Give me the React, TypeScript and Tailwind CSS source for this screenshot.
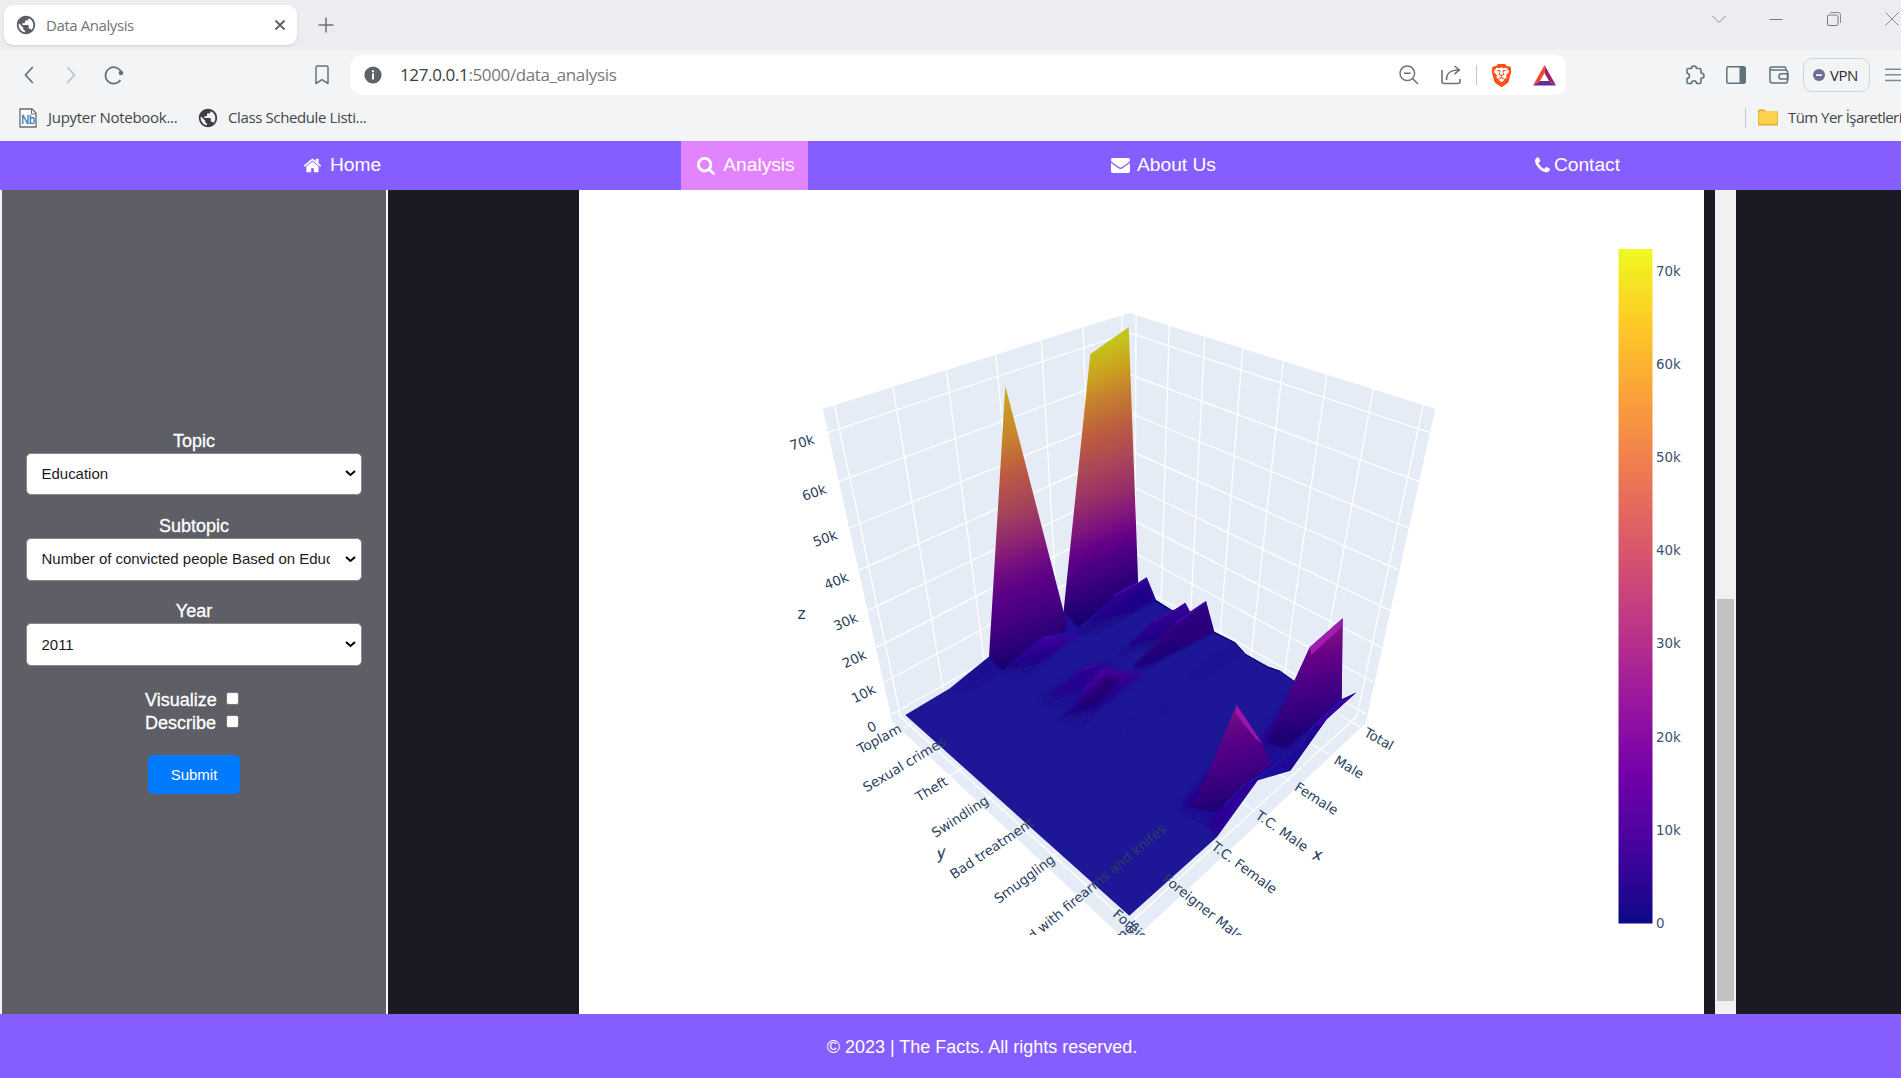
import React from "react";
import { MdPublic } from "react-icons/md";
import { SiBrave } from "react-icons/si";

const navIcons = {
  home: "M1472 992v480q0 26-19 45t-45 19h-384v-384h-256v384h-384q-26 0-45-19t-19-45v-480q0-1 .5-3t.5-3l575-474 575 474q1 2 1 6zm223-69l-62 74q-8 9-21 11h-3q-13 0-21-7l-692-577-692 577q-12 8-24 7-13-2-21-11l-62-74q-8-10-7-23.5t11-21.5l719-599q32-26 76-26t76 26l244 204v-195q0-14 9-23t23-9h192q14 0 23 9t9 23v408l219 182q10 8 11 21.5t-7 23.5z",
  search:
    "M1216 832q0-185-131.5-316.5t-316.5-131.5-316.5 131.5-131.5 316.5 131.5 316.5 316.5 131.5 316.5-131.5 131.5-316.5zm512 832q0 52-38 90t-90 38q-54 0-90-38l-343-342q-179 124-399 124-143 0-273.5-55.5t-225-150-150-225-55.5-273.5 55.5-273.5 150-225 225-150 273.5-55.5 273.5 55.5 225 150 150 225 55.5 273.5q0 220-124 399l343 343q37 37 37 90z",
  mail: "M1792 710v794q0 66-47 113t-113 47h-1472q-66 0-113-47t-47-113v-794q44 49 101 87 362 246 497 345 57 42 92.5 65.5t94.5 48 110 24.5h2q51 0 110-24.5t94.5-48 92.5-65.5q170-123 498-345 57-39 100-87zm0-294q0 79-49 151t-122 123q-376 261-468 325-10 7-42.5 31t-54 38.5-52 32.5-57.5 27-50 9h-2q-23 0-50-9t-57.5-27-52-32.5-54-38.5-42.5-31q-91-64-262-182.5t-205-142.5q-62-42-117-115.5t-55-136.5q0-78 41.5-130t118.5-52h1472q65 0 112.5 47t47.5 113z",
  phone:
    "M1600 1240q0 27-10 70.5t-21 68.5q-21 50-122 106-94 51-186 51-27 0-53-3.5t-57.5-12.5-47-14.5-55.5-20.5-49-18q-98-35-175-83-127-79-264-216t-216-264q-48-77-83-175-3-9-18-49t-20.5-55.5-14.5-47-12.5-57.5-3.5-53q0-92 51-186 56-101 106-122 25-11 68.5-21t70.5-10q14 0 21 3 18 6 53 76 11 19 30 54t35 63.5 31 53.5q3 4 17.5 25t21.5 35.5 7 28.5q0 20-28.5 50t-62 55-62 53-28.5 46q0 9 5 22.5t8.5 20.5 14 24 11.5 19q76 137 174 235t235 174q2 1 19 11.5t24 14 20.5 8.5 22.5 5q18 0 46-28.5t53-62 55-62 50-28.5q14 0 28.5 7t35.5 21.5 25 17.5q25 15 53.5 31t63.5 35 54 30q70 35 76 53 3 7 3 21z",
};

function TabStrip() {
  return (
    <div className="flex h-[50px] items-center bg-[#ecedf1]">
      <div className="ml-1 flex h-10 w-[293px] items-center rounded-[9px] bg-white pl-[11px] shadow-sm">
        <MdPublic size={22} className="text-[#5b5e63]" />
        <span className="ml-[9px] whitespace-nowrap text-[15px] tracking-[-0.42px] text-[#747477]">Data Analysis</span>
        <svg className="ml-auto mr-[11px]" width="12" height="12" viewBox="0 0 12 12" stroke="#5d5f63" strokeWidth="1.8">
          <path d="M1.5 1.5l9 9M10.5 1.5l-9 9" />
        </svg>
      </div>
      <svg className="ml-[21px]" width="16" height="16" viewBox="0 0 16 16" stroke="#6f7175" strokeWidth="1.5">
        <path d="M8 .5v15M.5 8h15" />
      </svg>
      <div className="-mr-1 mb-[13px] ml-auto flex items-center text-[#8b8d91]">
        <svg width="14" height="14" viewBox="0 0 14 14" fill="none" stroke="currentColor"><path d="M.5 4L7 10.5 13.500 4" /></svg>
        <svg className="ml-[43px]" width="14" height="14" viewBox="0 0 14 14" stroke="#77797d"><path d="M.5 7.500h13" /></svg>
        <svg className="ml-[44px]" width="14" height="14" viewBox="0 0 14 14" fill="none" stroke="currentColor">
          <rect x=".5" y="3" width="10.500" height="10.500" rx="1.500" stroke="#77797d" />
          <path d="M3 .5h8a2.500 2.500 0 0 1 2.500 2.500v8" />
        </svg>
        <svg className="ml-[44px]" width="14" height="14" viewBox="0 0 14 14" stroke="currentColor"><path d="M.5 .5l13 13M13.500 .5l-13 13" /></svg>
        <span className="w-[6px]" />
      </div>
    </div>
  );
}

function Toolbar() {
  return (
    <div className="flex h-[50px] items-center overflow-hidden text-[#5e737c]">
      <svg className="ml-[24px] shrink-0" width="10" height="18" viewBox="0 0 10 18" fill="none" stroke="currentColor" strokeWidth="1.7"><path d="M8.800 1L1.500 9l7.300 8" /></svg>
      <svg className="ml-[32px] shrink-0" width="10" height="18" viewBox="0 0 10 18" fill="none" stroke="#b9c2c7" strokeWidth="1.7"><path d="M1.200 1l7.300 8-7.300 8" /></svg>
      <svg className="ml-[28px] shrink-0" width="20" height="20" viewBox="0 0 20 20" fill="none" stroke="currentColor" strokeWidth="1.7">
        <path d="M16.500 15a8.200 8.200 0 1 1 1-7" />
        <circle cx="17" cy="8" r="2.300" fill="currentColor" stroke="none" />
      </svg>
      <svg className="ml-[191px] shrink-0" width="14" height="20" viewBox="0 0 14 20" fill="none" stroke="currentColor" strokeWidth="1.500" strokeLinejoin="round">
        <path d="M1 2.500Q1 1 2.500 1h9Q13 1 13 2.500V18.500L7 14.700 1 18.500z" />
      </svg>
      <div className="ml-[22px] flex h-10 w-[1215px] shrink-0 items-center rounded-[10px] bg-white pl-[13px]">
        <svg width="18" height="18" viewBox="0 0 18 18"><circle cx="9" cy="9" r="8.600" fill="#5f6368" /><path d="M8 7.600h2v5.900H8zM8 4.300h2v2H8z" fill="#fff" /></svg>
        <span className="ml-[18px] whitespace-nowrap text-[17px] tracking-[-0.37px] text-[#77797c]">
          <span className="text-[#3a3b3e]">127.0.0.1</span>:5000/data_analysis
        </span>
        <svg className="ml-auto" width="20" height="20" viewBox="0 0 20 20" fill="none" stroke="#6f7174" strokeWidth="1.500">
          <circle cx="8.300" cy="8.300" r="7.300" /><path d="M13.500 13.500L19 19M5 8.300h6.600" />
        </svg>
        <svg className="ml-[22px]" width="21" height="20" viewBox="0 0 21 20" fill="none" stroke="#6f7174" strokeWidth="1.600">
          <path d="M1 5v11.500Q1 18.500 3 18.500h14q2 0 2-2V14M5.500 15C5.500 8 9 5 18 5M13.500 1l4.800 4-4.800 4.200" />
        </svg>
        <span className="ml-[14px] h-5 w-px bg-[#c3c5c8]" />
        <SiBrave size={23} className="ml-[13px] text-[#fb4f14]" />
        <svg className="ml-[20px] mr-[10px]" width="23" height="21" viewBox="0 0 23 21">
          <path d="M11.500 0L0 20.500l7-4.500 4.500-8z" fill="#ff4724" />
          <path d="M11.500 0L23 20.500 16 16l-4.500-8z" fill="#9e1f63" />
          <path d="M0 20.500h23L16 16H7z" fill="#662d91" />
        </svg>
      </div>
      <svg className="ml-[119px] shrink-0" width="20" height="20" viewBox="0 0 20 20" fill="none" stroke="currentColor" strokeWidth="1.600" strokeLinejoin="round">
        <path d="M2 5q0-1.500 1.500-1.500h3C6.500 1.800 7.500 1 9 1s2.500.8 2.500 2.500h3Q16 3.500 16 5v3c1.700 0 3 1 3 2.700s-1.300 2.500-3 2.500V17q0 1.500-1.500 1.500h-3c0-1.700-1-2.700-2.500-2.700s-2.500 1-2.500 2.700h-3Q2 18.500 2 17v-3.500c1.600-.2 2.500-1.200 2.500-2.700S3.600 8.300 2 8z" />
      </svg>
      <svg className="ml-[21px] shrink-0" width="20" height="18" viewBox="0 0 20 18" fill="none" stroke="currentColor" strokeWidth="1.500">
        <rect x=".8" y=".8" width="18.400" height="16.400" rx="1.500" /><path d="M13.500 1h5.700v16h-5.700z" fill="currentColor" stroke="none" />
      </svg>
      <svg className="ml-[23px] shrink-0" width="20" height="18" viewBox="0 0 20 18" fill="none" stroke="currentColor" strokeWidth="1.500">
        <path d="M1 3.500v11q0 2.500 2.500 2.500h13q2 0 2-2V6q0-2-2-2H3Q1 4 1 2.500T3 1h12.500q1.500 0 1.500 3M19 7.800h-6.500a2.600 2.600 0 0 0 0 5.200H19z" />
      </svg>
      <div className="ml-[14px] flex h-[34px] w-[67px] shrink-0 items-center rounded-[9px] border border-[#ccd5db] pl-[9px]">
        <svg width="12" height="12" viewBox="0 0 12 12"><circle cx="6" cy="6" r="6" fill="#6b7091" /><path d="M3 5.300h6v1.600H3z" fill="#fff" /></svg>
        <span className="ml-[5px] text-[15px] tracking-[-0.5px] text-[#2a2d31]">VPN</span>
      </div>
      <svg className="ml-[15px] shrink-0" width="20" height="14" viewBox="0 0 20 14" stroke="#7d8d96" strokeWidth="1.400"><path d="M0 1.200h20M0 6.700h20M0 12.500h20" /></svg>
    </div>
  );
}

function BookmarksBar() {
  return (
    <div className="flex h-[41px] items-center overflow-hidden pb-[6px] text-[15px] text-[#434548]">
      <svg className="ml-[19px] shrink-0" width="18" height="20" viewBox="0 0 18 20">
        <path d="M1 1h12l4 4v14H1z" fill="#fff" stroke="#6b6b6b" strokeWidth="1.300" /><path d="M12.500 1v5H17" fill="none" stroke="#6b6b6b" />
        <text x="2.200" y="15.500" fontSize="12" fontFamily="Liberation Sans" fill="#2e75b0" textLength="14" lengthAdjust="spacingAndGlyphs" stroke="#2e75b0" strokeWidth=".3">Nb</text>
      </svg>
      <span className="ml-[11px] w-[141px] shrink-0 whitespace-nowrap tracking-[-0.28px]">Jupyter Notebook...</span>
      <span className="ml-[8px] shrink-0"><MdPublic size={22} className="text-[#3c3e42]" /></span>
      <span className="ml-[9px] shrink-0 whitespace-nowrap tracking-[-0.38px]">Class Schedule Listi...</span>
      <div className="ml-auto flex w-[156px] shrink-0 items-center">
        <span className="h-5 w-px shrink-0 bg-[#c6c9cc]" />
        <svg className="ml-[12px] shrink-0" width="20" height="17" viewBox="0 0 20 17">
          <path d="M0 2Q0 .5 1.500 .5h5l1.500 2h9v3H0z" fill="#e5a21b" /><rect y="2" width="20" height="14.500" rx="1.500" fill="#d9a520" /><rect x=".5" y="2" width="19" height="13.300" rx="1.500" fill="#ffd24d" />
        </svg>
        <span className="ml-[10px] whitespace-nowrap tracking-[-0.55px]">Tüm Yer İşaretleri</span>
      </div>
    </div>
  );
}

function NavItem({ icon, label, className, box, gap, size = 19 }: { icon: string; label: string; className: string; box: string; gap: string; size?: number }) {
  return (
    <a className={"flex h-full shrink-0 items-center justify-center whitespace-nowrap " + className}>
      <svg width={size} height={size} viewBox={box} fill="currentColor"><path d={icon} /></svg>
      <span className={gap}>{label}</span>
    </a>
  );
}

function SelectField({ label, value }: { label: string; value: string }) {
  return (
    <div className="mb-[21.800px] w-[336px]">
      <div className="h-[21px] text-center text-[18px] leading-[19.500px] text-white [-webkit-text-stroke:0.3px_white]">{label}</div>
      <div className="flex h-[42.600px] items-center rounded-[5px] border border-[#8a8a8a] bg-white pl-[14.500px] text-[15px] text-[#1c1c1c]">
        <span className="w-[288px] overflow-hidden whitespace-nowrap tracking-[-0.02px]">{value}</span>
        <svg className="ml-[15.500px]" width="11" height="7" viewBox="0 0 11 7" fill="none" stroke="#000" strokeWidth="2"><path d="M1 1l4.500 4L10 1" /></svg>
      </div>
    </div>
  );
}

function CheckRow({ label }: { label: string }) {
  return (
    <div className="flex h-[23px] w-[94px] items-center justify-between text-[18px] text-white">
      <span className="[-webkit-text-stroke:0.3px_white]">{label}</span>
      <span className="mb-[3px] size-[13px] shrink-0 rounded-[2.500px] border border-[#767676] bg-white" />
    </div>
  );
}

type Label = [string, number, number, number];
const axisLabels: Label[] = [
  ["70k", 791.5, 450.5, -17], ["60k", 804, 501, -19], ["50k", 815, 547, -20], ["40k", 826.5, 590, -22],
  ["30k", 836, 631, -23.5], ["20k", 845, 668.5, -25], ["10k", 854.5, 703.5, -27], ["0", 870, 733, -26],
  ["Toplam", 860.5, 754, -28], ["Sexual crimes", 866.5, 792.5, -31], ["Theft", 919, 802, -31],
  ["Swindling", 935.5, 838, -33], ["Bad treatment", 954, 879.5, -34], ["Smuggling", 998.5, 904, -36.5],
  ["Total", 1363, 735.5, 29], ["Male", 1333, 763, 31], ["Female", 1293.5, 789.5, 32.5], ["T.C. Male", 1254.5, 817.5, 35],
  ["T.C. Female", 1210.5, 848.5, 36.5], ["Foreigner Male", 1161.500, 880.5, 38.5], ["Foreigner Female", 1112, 915.5, 41],
];

const leftVerticals = [
  [834.3, 405, 900.700, 717], [892.700, 386, 943.300, 690], [946.300, 369.700, 984, 660], [995.700, 354.300, 1022, 630],
  [1041.300, 340.300, 1057, 610], [1083, 327.300, 1092, 595], [1122, 315, 1124, 585],
];
const rightVerticals = [
  [1136, 315.300, 1135, 585], [1169.300, 325.300, 1161, 603], [1204.700, 336.300, 1190.500, 618], [1242.700, 348.300, 1220, 636],
  [1283.300, 361, 1251, 658], [1326.700, 375, 1284, 678], [1373.300, 389.300, 1316, 700], [1423.300, 405, 1356.700, 716.700],
];
const levels = [
  [828, 432.700, 332.700], [838.700, 481.700, 374.300], [849.300, 528, 412.700], [858.700, 570.300, 450.300],
  [867.700, 610.700, 485], [876, 647.700, 518.300], [884, 682.300, 550], [891.700, 714.300, 581],
];
const floorTicks = [
  [904, 728, 912, 723], [950, 776, 962, 768], [983, 802, 995, 794], [1015, 830, 1027, 822], [1047, 860, 1059, 852], [1082, 891, 1094, 883],
  [1360, 727, 1340, 715.500], [1329.500, 754.500, 1308, 742], [1290, 781, 1270, 769], [1254, 811, 1236, 799], [1215, 845, 1198, 833], [1172, 882, 1158, 873],
];
const colorScale = ["#0d0887", "#46039f", "#7201a8", "#9c179e", "#bd3786", "#d8576b", "#ed7953", "#fb9f3a", "#fdca26", "#f0f921"];
const sheetOutline =
  "M905.300 715L950 688.300 989 656.700 1000 645 1064 612.500 1069 592 1137 578 1138 583 1146.700 577.300 1156 600 1173 610.700 1185.300 602.700 1190 611.700 1206 601 1214.300 631.700 1235 642.300 1245.700 654 1268.300 666.700 1280 670.700 1294.300 681 1309.700 647.300 1342.700 618.300 1341.700 699.300 1356.700 692.300 1326.700 719.300 1290.300 770.700 1257.700 780.300 1216.700 837.300 1129.300 915.700z";

function Stops({ data }: { data: [number, string][] }) {
  return <>{data.map(([o, c]) => <stop key={o} offset={o} stopColor={c} />)}</>;
}

function SurfaceChart() {
  return (
    <svg className="block" width="1125" height="824" viewBox="579 190 1125 824" fontFamily="'DejaVu Sans', Verdana, sans-serif">
      <defs>
        <clipPath id="scene"><rect x="579" y="190" width="1125" height="745" /></clipPath>
        <clipPath id="sheet"><path d={sheetOutline} /></clipPath>
        <filter id="soft0" x="-30%" y="-30%" width="160%" height="160%"><feGaussianBlur stdDeviation="2" /></filter>
        <filter id="soft1" x="-30%" y="-30%" width="160%" height="160%"><feGaussianBlur stdDeviation="4" /></filter>
        <filter id="soft2" x="-40%" y="-40%" width="180%" height="180%"><feGaussianBlur stdDeviation="10" /></filter>
        <linearGradient id="bar" x1="0" y1="1" x2="0" y2="0">
          {colorScale.map((c, i) => <stop key={c} offset={i / 9} stopColor={c} />)}
        </linearGradient>
        <linearGradient id="peakB" gradientUnits="userSpaceOnUse" x1="1106.700" y1="343.300" x2="1197.500" y2="582.600">
          <Stops data={[[0, "#c4c41c"], [0.11, "#cba01f"], [0.2, "#c67f2e"], [0.33, "#bb5a42"], [0.45, "#a8455a"], [0.56, "#962d6a"], [0.65, "#80157c"], [0.73, "#650088"], [0.8, "#4a0085"], [0.91, "#2a007a"], [1, "#14006c"]]} />
        </linearGradient>
        <linearGradient id="peakA" gradientUnits="userSpaceOnUse" x1="1013" y1="386" x2="1106" y2="631.400">
          <Stops data={[[0, "#c8a81e"], [0.17, "#c8852b"], [0.31, "#bb5a42"], [0.45, "#a3425c"], [0.56, "#8d2472"], [0.63, "#78107f"], [0.73, "#5a0088"], [0.82, "#480085"], [0.94, "#280075"], [1, "#14006a"]]} />
        </linearGradient>
        <linearGradient id="peakC" gradientUnits="userSpaceOnUse" x1="690" y1="200" x2="745" y2="500">
          <Stops data={[[0, "#8a1480"], [0.25, "#6a0088"], [0.5, "#4c0085"], [0.8, "#300080"], [1, "#1c0074"]]} />
        </linearGradient>
        <linearGradient id="peakD" gradientUnits="userSpaceOnUse" x1="400" y1="450" x2="470" y2="730">
          <Stops data={[[0, "#780f80"], [0.3, "#5a0088"], [0.6, "#420084"], [0.85, "#2b0078"], [1, "#1a0074"]]} />
        </linearGradient>
        <linearGradient id="ridge" x1=".3" y1=".1" x2=".65" y2="1">
          <Stops data={[[0, "#4204a0"], [0.35, "#2c0090"], [0.7, "#1b0886"], [1, "#1d1696"]]} />
        </linearGradient>
        <linearGradient id="ridgeHi" x1=".3" y1=".1" x2=".65" y2="1">
          <Stops data={[[0, "#5206a2"], [0.3, "#3a0088"], [0.65, "#1e0076"], [1, "#1d1696"]]} />
        </linearGradient>
      </defs>
      <g clipPath="url(#scene)">
        <path d="M1129 313L1435.300 408.700 1365.700 723.300 1129 944 892.300 721.700 822.700 408.700z" fill="#e5ecf6" />
        <g stroke="#fff" strokeWidth="1.300" fill="none">
          {[...leftVerticals, ...rightVerticals, ...floorTicks].map(([a, b, c, d], i) => <path key={i} d={`M${a} ${b}L${c} ${d}`} />)}
          {levels.map(([x, y, m]) => <path key={x} d={`M${x} ${y}L1129 ${m}L${2258 - x} ${y}`} />)}
          <path d="M900.700 717L1129 924 1356.700 716.700" />
        </g>
        <path d={sheetOutline} fill="#1d1697" />

        {/* tall ridges against the back walls */}
        <path d="M1063.500 612L1090.300 354 1128.700 327.300 1138.200 583.500 1112 599 1078 628z" fill="url(#peakB)" />
        <path d="M989 656.700L1005.300 386 1063.700 611.700 1073 631 1043 637 1003 670 996 668z" fill="url(#peakA)" />

        <g clipPath="url(#sheet)">
          {/* low ridges across the sheet */}
          <g transform="translate(980 560) scale(.33333)">
            <path d="M262 180L288 208 315 215 255 225z" fill="#1f0c9c" filter="url(#soft1)" />
            <path d="M-85 395L20 285 60 332 -10 372z" fill="#1b0a90" filter="url(#soft2)" />
            <path d="M285 225L345 165 405 107 500 52 527 120 430 175 350 215z" fill="url(#ridge)" filter="url(#soft1)" />
            <path d="M400 150L500 60 522 118 430 165z" fill="#1f0088" opacity=".7" filter="url(#soft1)" />
            <path d="M70 340L100 300 192 232 310 222 240 265 130 345z" fill="url(#ridge)" filter="url(#soft2)" />
            <path d="M110 325L192 232 270 234 200 290z" fill="url(#ridge)" filter="url(#soft1)" />
            <path d="M410 290L520 185 615 129 640 165 560 240z" fill="url(#ridge)" filter="url(#soft1)" />
            <path d="M455 325L585 190 678 124 702 215 560 290 500 330z" fill="url(#ridgeHi)" filter="url(#soft1)" />
            <path d="M560 240L590 195 678 128 700 212 610 262z" fill="#2a007c" opacity=".8" filter="url(#soft1)" />
            <path d="M180 425L305 326 405 308 330 380 230 430z" fill="url(#ridge)" opacity=".8" filter="url(#soft2)" />
            <path d="M220 415L305 326 375 312 320 375z" fill="#2b0092" opacity=".7" filter="url(#soft1)" />
            <path d="M240 480L368 328 495 345 420 395 300 490z" fill="url(#ridge)" filter="url(#soft2)" />
            <path d="M285 455L368 328 455 338 395 385 320 450z" fill="url(#ridgeHi)" filter="url(#soft1)" />
            <path d="M375 340L412 358 385 395 330 440z" fill="#180068" opacity=".6" filter="url(#soft2)" />
            <path d="M370 331L310 395" stroke="#5506a8" strokeWidth="5" filter="url(#soft1)" />
            <path d="M630 355L765 252 785 260 680 345z" fill="#1a0d8e" opacity=".4" filter="url(#soft2)" />
            <path d="M410 520L530 435 560 440 450 530z" fill="#21118f" opacity=".4" filter="url(#soft2)" />
            <path d="M400 108L500 54M590 188L678 126M520 186L613 131M305 327L345 318M195 234L230 233" stroke="#4207a5" strokeWidth="6" fill="none" filter="url(#soft0)" />
            <path d="M527 122L552 138 582 152M702 216L767 248 798 283 868 322 905 334 943 362" stroke="#08006a" strokeWidth="6" fill="none" filter="url(#soft0)" />
          </g>

          {/* front right ridges */}
          <g transform="translate(1100 560) scale(.33333)">
            <path d="M480 540L590 375 629 300 640 500 520 590z" fill="#25058e" filter="url(#soft2)" />
            <path d="M240 740L330 630 410 500 530 620 330 790z" fill="#21048c" filter="url(#soft2)" />
            <path d="M629 262L728 175 726 418 640 495 560 568 500 553 583 363z" fill="url(#peakC)" />
            <path d="M490 560L505 548 562 566 520 600z" fill="#1d0a90" filter="url(#soft1)" />
            <path d="M629 262L728 175 724 202 634 284z" fill="#a31fb0" filter="url(#soft0)" />
            <path d="M410 434L500 570 520 612 430 677 345 755 278 742 330 625z" fill="url(#peakD)" />
            <path d="M260 740L350 760 330 800 250 760z" fill="#1d0d92" filter="url(#soft1)" />
            <path d="M410 434L486 550 466 535 405 458z" fill="#9a16ac" filter="url(#soft0)" />
            <path d="M490 560L515 612 600 560 640 495 560 570z" fill="#1e0a96" filter="url(#soft1)" />
            <path d="M725 418L770 397 680 478 571 632 530 615 600 555 640 495z" fill="#25008e" filter="url(#soft0)" />
            <path d="M728 420L770 397 680 478 665 500 650 492z" fill="#3c00a0" filter="url(#soft0)" />
            <path d="M600 555L640 495 655 510 571 632 535 615z" fill="#1c0b96" opacity=".75" filter="url(#soft1)" />
            <path d="M473 661L571 632 525 612 430 675z" fill="#1f0f9c" filter="url(#soft0)" />
            <path d="M350 832L473 661 430 676 345 765 320 795z" fill="#2a0093" filter="url(#soft1)" />
            <path d="M350 832L473 661 440 680 385 750z" fill="#3600a0" opacity=".6" filter="url(#soft1)" />
            <path d="M375 735L430 677 520 620 600 558 640 497 725 420" stroke="#1d1aa4" strokeWidth="4" fill="none" filter="url(#soft0)" />
          </g>
        </g>

        <g fill="#2a3f5f" fontSize="13.400">
          {axisLabels.map(([t, x, y, a]) => <text key={t} transform={`translate(${x} ${y}) rotate(${a})`}>{t}</text>)}
          <text textAnchor="end" transform="translate(1167 830.500) rotate(-39.500)">related with firearms and knifes</text>
          <text textAnchor="end" transform="translate(1140 925) rotate(-41)">Other crimes</text>
          <text x="797.500" y="618.500" fontSize="15.500">z</text>
          <text fontSize="15" stroke="#2a3f5f" strokeWidth=".3" transform="translate(937 860) rotate(-20) skewX(-22)">y</text>
          <text fontSize="15" stroke="#2a3f5f" strokeWidth=".3" transform="translate(1311.500 859) rotate(8) skewX(-12)">x</text>
        </g>
      </g>
      <rect x="1618.500" y="249" width="34" height="674.500" fill="url(#bar)" />
      <g fill="#3d5170" fontSize="13.400">
        {["70k", "60k", "50k", "40k", "30k", "20k", "10k", "0"].map((t, i) => (
          <text key={t} x="1656" y={275.500 + i * 93.200}>{t}</text>
        ))}
      </g>
    </svg>
  );
}

export default function App() {
  return (
    <div className="flex h-[1078px] w-[1901px] flex-col overflow-hidden bg-[#1a1a24] font-['Liberation_Sans',Arial,sans-serif]">
      <header className="h-[141px] shrink-0 bg-[#f3f4f6] font-['Open_Sans',sans-serif]">
        <TabStrip />
        <Toolbar />
        <BookmarksBar />
      </header>
      <nav className="flex h-[49px] shrink-0 bg-[#865eff] text-[19.200px] text-white">
        <NavItem icon={navIcons.home} box="0 0 1792 1792" label="Home" gap="ml-[8px]" className="ml-[289px] w-[106px]" />
        <NavItem icon={navIcons.search} box="64 128 1664 1664" label="Analysis" gap="ml-[8px]" size={18} className="ml-[286px] w-[127px] bg-[#e384ff] pl-[3px]" />
        <NavItem icon={navIcons.mail} box="0 64 1792 1792" label="About Us" gap="ml-[7px]" className="ml-[289px] w-[133px]" />
        <NavItem icon={navIcons.phone} box="96 96 1696 1696" label="Contact" gap="ml-[2px]" size={18} className="ml-[290px] w-[114px]" />
      </nav>
      <main className="flex h-[824px] shrink-0">
        <aside className="flex w-[388px] shrink-0 flex-col items-center border-x-2 border-[#f5f5f5] bg-[#5e5e66] pt-[241.700px]">
          <SelectField label="Topic" value="Education" />
          <SelectField label="Subtopic" value="Number of convicted people Based on Education" />
          <SelectField label="Year" value="2011" />
          <div className="mt-[1px] pr-[4px]">
            <CheckRow label="Visualize" />
            <CheckRow label="Describe" />
          </div>
          <button className="mt-[20.500px] h-[39px] w-[92px] rounded-[5px] bg-[#007bff] text-[15px] text-white">Submit</button>
        </aside>
        <section className="ml-[191px] h-full w-[1125px] shrink-0 bg-white"><SurfaceChart /></section>
        <div className="ml-[11px] flex h-full w-[21px] shrink-0 justify-center bg-[#f1f1f1]">
          <div className="mt-[409px] h-[402px] w-[17px] bg-[#c1c1c1]" />
        </div>
      </main>
      <footer className="flex h-[64px] shrink-0 items-center justify-center bg-[#865eff] pl-[63px] pt-[2px] text-[18px] text-white">
        <p>© 2023 | The Facts. All rights reserved.</p>
      </footer>
    </div>
  );
}
